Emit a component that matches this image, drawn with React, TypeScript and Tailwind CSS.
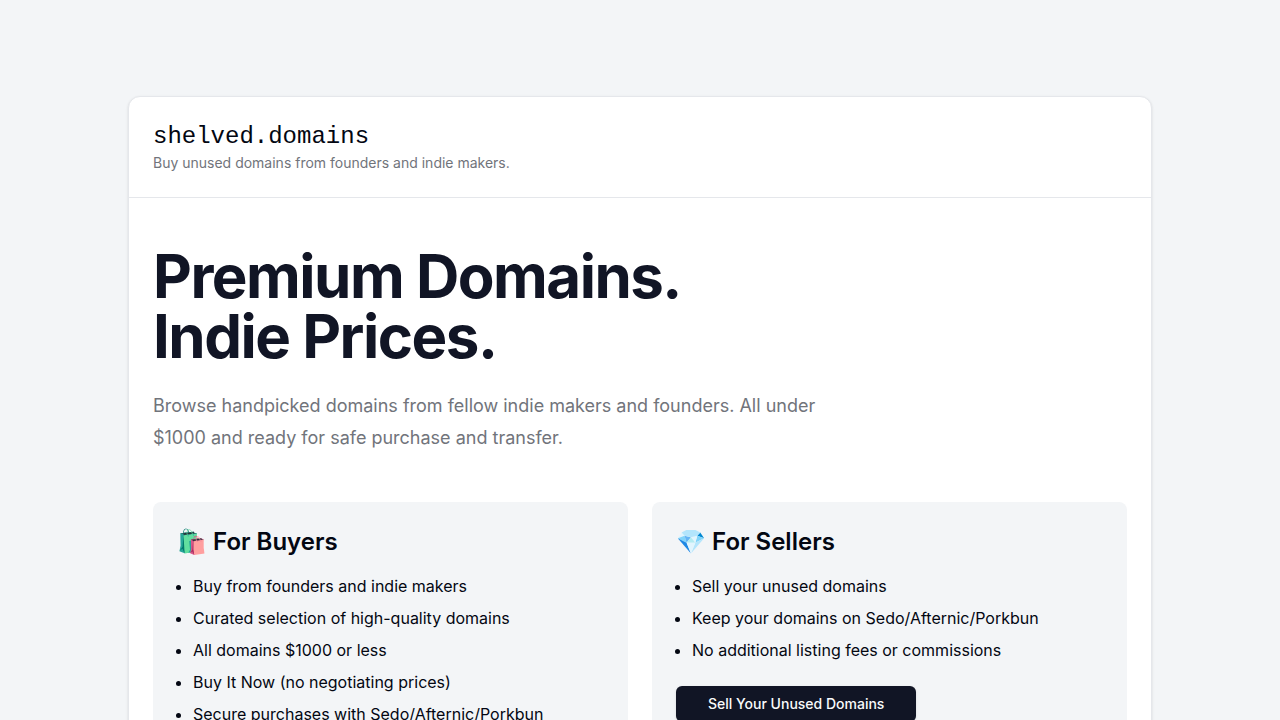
const buyerPoints = [
  "Buy from founders and indie makers",
  "Curated selection of high-quality domains",
  "All domains $1000 or less",
  "Buy It Now (no negotiating prices)",
  "Secure purchases with Sedo/Afternic/Porkbun",
];

const sellerPoints = [
  "Sell your unused domains",
  "Keep your domains on Sedo/Afternic/Porkbun",
  "No additional listing fees or commissions",
];

function Points({ items }: { items: string[] }) {
  return (
    <ul className="mt-4 list-disc space-y-2 pl-4">
      {items.map((item) => (
        <li key={item}>{item}</li>
      ))}
    </ul>
  );
}

export default function App() {
  return (
    <div className="min-h-screen bg-[#f3f5f7] py-24 font-['Inter',sans-serif] text-[#030712]">
      <main className="mx-auto max-w-5xl rounded-xl border border-gray-200 bg-white shadow-sm">
        <header className="border-b border-gray-200 p-6">
          <h1 className="font-['Liberation_Mono',monospace] text-2xl">shelved.domains</h1>
          <p className="text-sm text-[#71747b]">Buy unused domains from founders and indie makers.</p>
        </header>
        <div className="px-6 py-12">
          <h2 className="text-6xl font-bold tracking-tight text-[#111525]">
            Premium Domains.
            <br />
            Indie Prices.
          </h2>
          <p className="mt-6 max-w-2xl text-lg leading-8 text-[#71747b]">
            Browse handpicked domains from fellow indie makers and founders. All under $1000 and
            ready for safe purchase and transfer.
          </p>
          <div className="mt-12 grid grid-cols-2 gap-6">
            <section className="rounded-lg bg-[#f3f5f7] p-6">
              <h3 className="text-2xl font-semibold">🛍️ For Buyers</h3>
              <Points items={buyerPoints} />
            </section>
            <section className="rounded-lg bg-[#f3f5f7] p-6">
              <h3 className="text-2xl font-semibold">💎 For Sellers</h3>
              <Points items={sellerPoints} />
              <button
                type="button"
                className="mt-6 h-9 rounded-md bg-[#111525] px-8 text-sm font-medium text-gray-50 shadow-sm"
              >
                Sell Your Unused Domains
              </button>
            </section>
          </div>
        </div>
      </main>
    </div>
  );
}
